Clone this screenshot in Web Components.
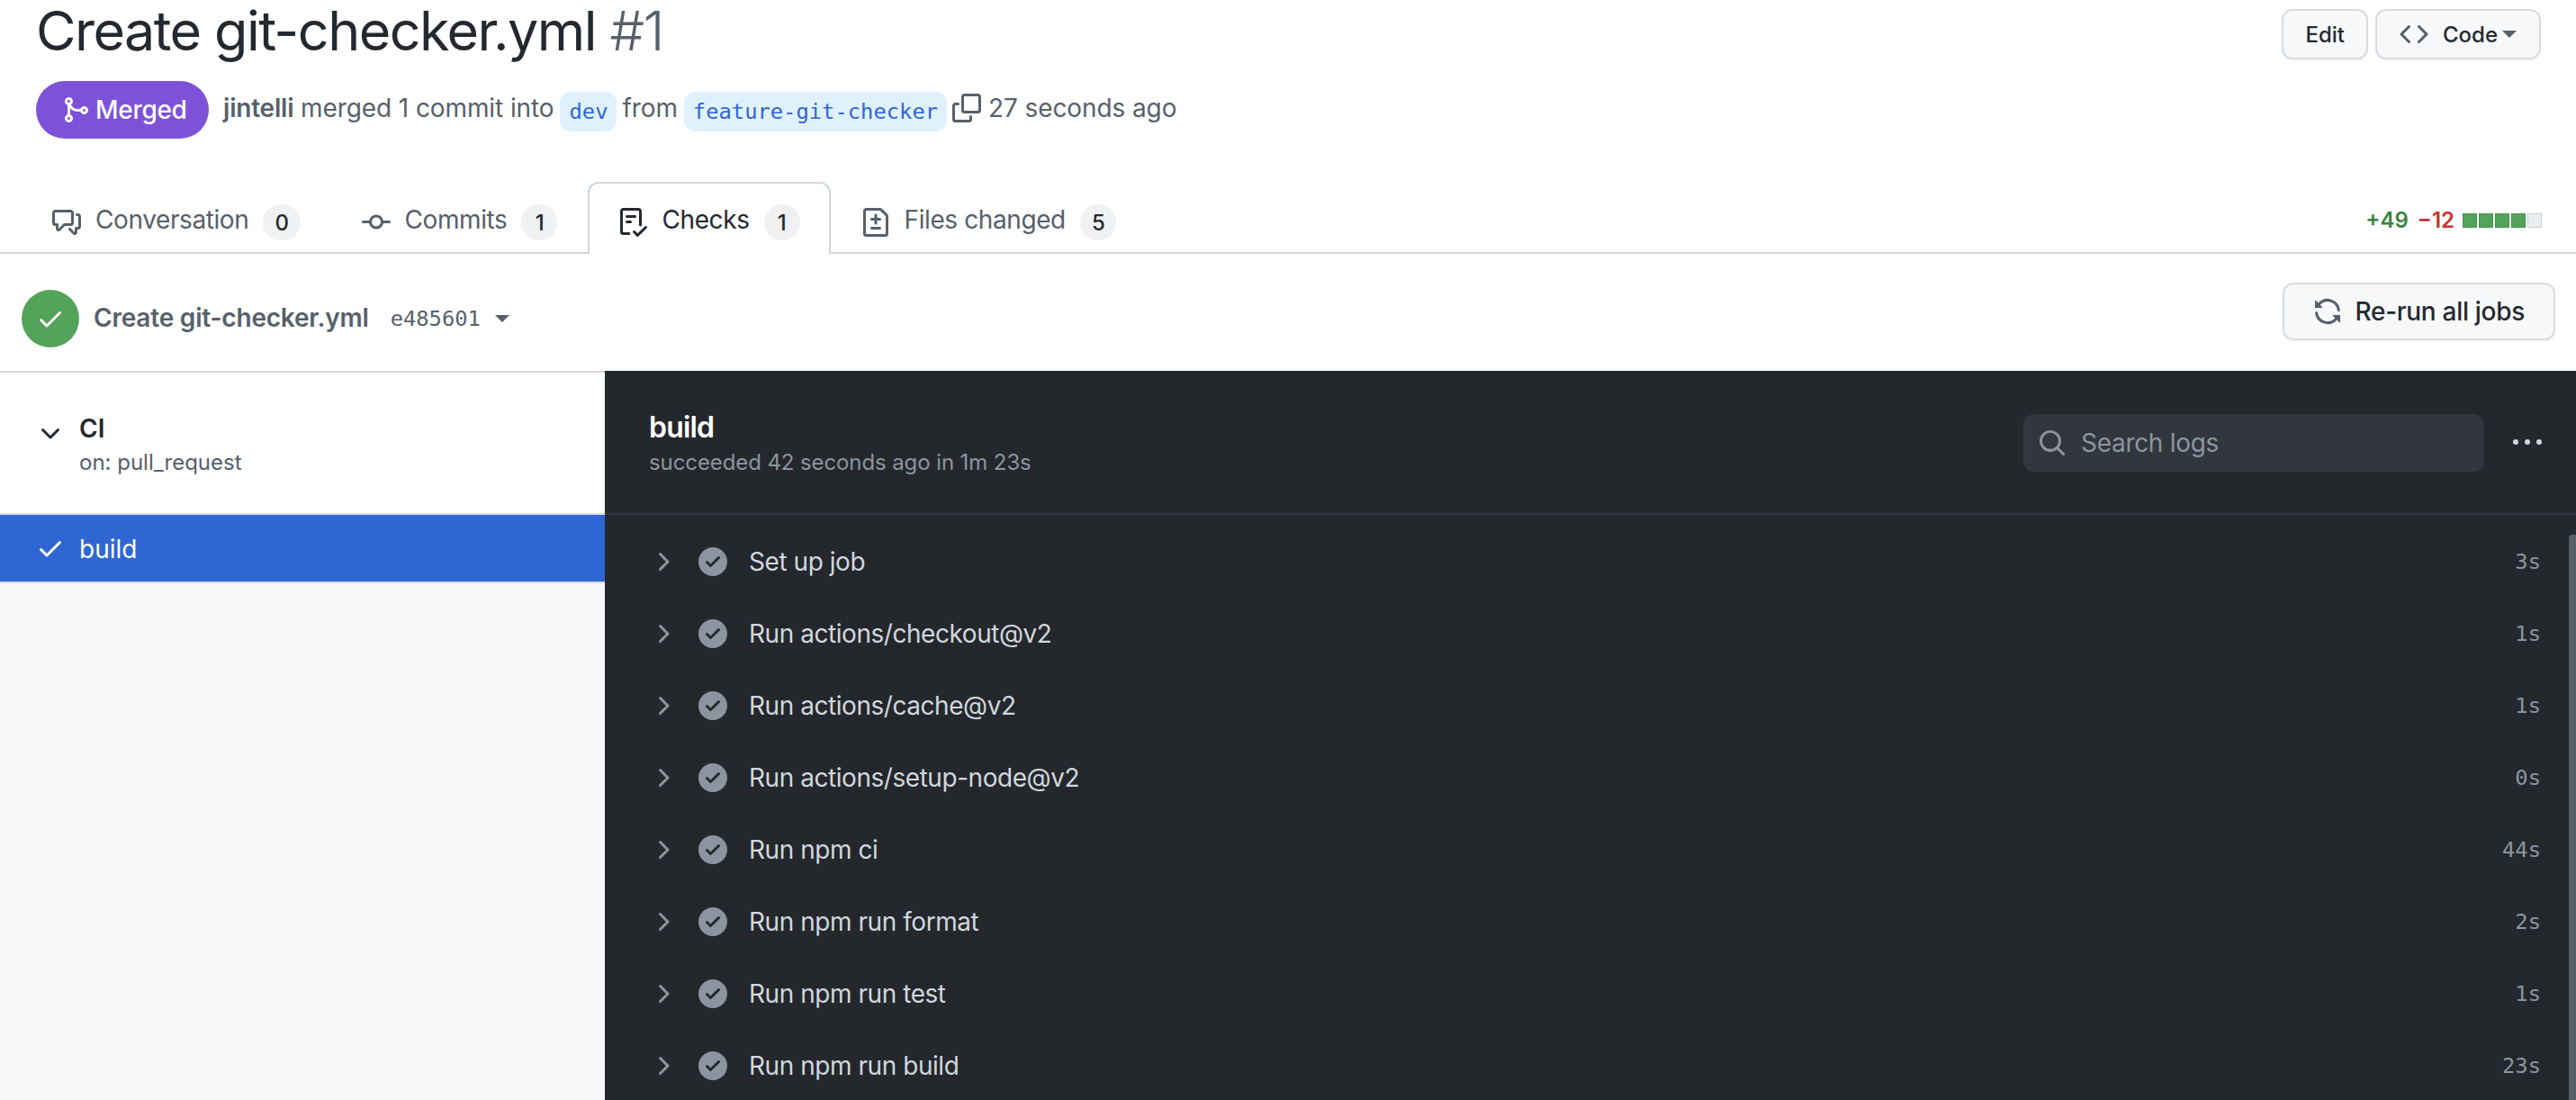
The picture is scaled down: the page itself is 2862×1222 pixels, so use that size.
<!DOCTYPE html>
<html>
<head>
<meta charset="utf-8">
<title>Create git-checker.yml #1</title>
<style>
  html, body { margin: 0; height: 100%; overflow: hidden; background: #fff; }
  body { font-family: Inter, "Noto Sans", sans-serif; color: #24292f; }
</style>
</head>
<body>
<pr-page></pr-page>
<script>
const ICONS = {
  merge: "M5.45 5.154A4.25 4.25 0 0 0 9.25 7.5h1.378a2.251 2.251 0 1 1 0 1.5H9.25A5.734 5.734 0 0 1 5 7.123v3.505a2.25 2.25 0 1 1-1.5 0V5.372a2.25 2.25 0 1 1 1.95-.218ZM4.25 13.5a.75.75 0 1 0 0-1.5.75.75 0 0 0 0 1.5Zm8.5-4.5a.75.75 0 1 0 0-1.5.75.75 0 0 0 0 1.5ZM5 3.25a.75.75 0 1 0 0 .005V3.25Z",
  discussion: "M1.75 1h8.5c.966 0 1.75.784 1.75 1.75v5.5A1.75 1.75 0 0 1 10.25 10H7.061l-2.574 2.573A1.458 1.458 0 0 1 2 11.543V10h-.25A1.75 1.75 0 0 1 0 8.25v-5.5C0 1.784.784 1 1.75 1ZM1.5 2.75v5.5c0 .138.112.25.25.25h1a.75.75 0 0 1 .75.75v2.19l2.72-2.72a.749.749 0 0 1 .53-.22h3.5a.25.25 0 0 0 .25-.25v-5.5a.25.25 0 0 0-.25-.25h-8.5a.25.25 0 0 0-.25.25Zm13 2a.25.25 0 0 0-.25-.25h-.5a.75.75 0 0 1 0-1.5h.5c.966 0 1.75.784 1.75 1.75v5.5A1.75 1.75 0 0 1 14.25 12H14v1.543a1.458 1.458 0 0 1-2.487 1.03L9.22 12.28a.749.749 0 0 1 .326-1.275.749.749 0 0 1 .734.215l2.22 2.22v-2.19a.75.75 0 0 1 .75-.75h1a.25.25 0 0 0 .25-.25Z",
  commit: "M11.93 8.5a4.002 4.002 0 0 1-7.86 0H.75a.75.75 0 0 1 0-1.5h3.32a4.002 4.002 0 0 1 7.86 0h3.32a.75.75 0 0 1 0 1.5Zm-1.43-.75a2.5 2.5 0 1 0-5 0 2.5 2.5 0 0 0 5 0Z",
  checklist: "M2.5 1.75v11.5c0 .138.112.25.25.25h3.17a.75.75 0 0 1 0 1.5H2.75A1.75 1.75 0 0 1 1 13.25V1.75C1 .784 1.784 0 2.75 0h8.5C12.216 0 13 .784 13 1.75v7.736a.75.75 0 0 1-1.5 0V1.75a.25.25 0 0 0-.25-.25h-8.5a.25.25 0 0 0-.25.25Zm13.274 9.537v-.001l-4.557 4.45a.75.75 0 0 1-1.055-.008l-1.943-1.95a.75.75 0 0 1 1.062-1.058l1.419 1.425 4.026-3.932a.75.75 0 1 1 1.048 1.074ZM4.75 4h4.5a.75.75 0 0 1 0 1.5h-4.5a.75.75 0 0 1 0-1.5ZM4 7.75A.75.75 0 0 1 4.75 7h2a.75.75 0 0 1 0 1.5h-2A.75.75 0 0 1 4 7.75Z",
  filediff: "M1 1.75C1 .784 1.784 0 2.75 0h7.586c.464 0 .909.184 1.237.513l2.914 2.914c.329.328.513.773.513 1.237v9.586A1.75 1.75 0 0 1 13.25 16H2.75A1.75 1.75 0 0 1 1 14.25Zm1.75-.25a.25.25 0 0 0-.25.25v12.5c0 .138.112.25.25.25h10.5a.25.25 0 0 0 .25-.25V4.664a.25.25 0 0 0-.073-.177l-2.914-2.914a.25.25 0 0 0-.177-.073ZM8 3.25a.75.75 0 0 1 .75.75v1.5h1.5a.75.75 0 0 1 0 1.5h-1.5v1.5a.75.75 0 0 1-1.5 0V7h-1.5a.75.75 0 0 1 0-1.5h1.5V4A.75.75 0 0 1 8 3.25Zm-3 8a.75.75 0 0 1 .75-.75h4.5a.75.75 0 0 1 0 1.5h-4.5a.75.75 0 0 1-.75-.75Z",
  copy: "M0 6.75C0 5.784.784 5 1.75 5h1.5a.75.75 0 0 1 0 1.5h-1.5a.25.25 0 0 0-.25.25v7.5c0 .138.112.25.25.25h7.5a.25.25 0 0 0 .25-.25v-1.5a.75.75 0 0 1 1.5 0v1.5A1.75 1.75 0 0 1 9.25 16h-7.5A1.75 1.75 0 0 1 0 14.25ZM5 1.75C5 .784 5.784 0 6.75 0h7.5C15.216 0 16 .784 16 1.75v7.5A1.75 1.75 0 0 1 14.25 11h-7.5A1.75 1.75 0 0 1 5 9.25Zm1.75-.25a.25.25 0 0 0-.25.25v7.5c0 .138.112.25.25.25h7.5a.25.25 0 0 0 .25-.25v-7.5a.25.25 0 0 0-.25-.25Z",
  code: "m11.28 3.22 4.25 4.25a.75.75 0 0 1 0 1.06l-4.25 4.25a.749.749 0 0 1-1.275-.326.749.749 0 0 1 .215-.734L13.94 8l-3.72-3.72a.749.749 0 0 1 .326-1.275.749.749 0 0 1 .734.215Zm-6.56 0a.751.751 0 0 1 1.042.018.751.751 0 0 1 .018 1.042L2.06 8l3.72 3.72a.749.749 0 0 1-.326 1.275.749.749 0 0 1-.734-.215L.47 8.53a.75.75 0 0 1 0-1.06Z",
  sync: "M1.705 8.005a.75.75 0 0 1 .834.656 5.5 5.5 0 0 0 9.592 2.97l-1.204-1.204a.25.25 0 0 1 .177-.427h3.646a.25.25 0 0 1 .25.25v3.646a.25.25 0 0 1-.427.177l-1.38-1.38A7.002 7.002 0 0 1 1.05 8.84a.75.75 0 0 1 .656-.834ZM8 2.5a5.487 5.487 0 0 0-4.131 1.869l1.204 1.204A.25.25 0 0 1 4.896 6H1.25A.25.25 0 0 1 1 5.75V2.104a.25.25 0 0 1 .427-.177l1.38 1.38A7.002 7.002 0 0 1 14.95 7.16a.75.75 0 0 1-1.49.178A5.5 5.5 0 0 0 8 2.5Z",
  check: "M13.78 4.22a.75.75 0 0 1 0 1.06l-7.25 7.25a.75.75 0 0 1-1.06 0L2.22 9.28a.751.751 0 0 1 .018-1.042.751.751 0 0 1 1.042-.018L6 10.94l6.72-6.72a.75.75 0 0 1 1.06 0Z",
  down: "M12.78 5.22a.749.749 0 0 1 0 1.06l-4.25 4.25a.749.749 0 0 1-1.06 0L3.22 6.28a.749.749 0 1 1 1.06-1.06L8 8.939l3.72-3.719a.749.749 0 0 1 1.06 0Z",
  right: "M6.22 3.22a.75.75 0 0 1 1.06 0l4.25 4.25a.75.75 0 0 1 0 1.06l-4.25 4.25a.751.751 0 0 1-1.042-.018.751.751 0 0 1-.018-1.042L9.94 8 6.22 4.28a.75.75 0 0 1 0-1.06Z",
  kebab: "M8 9a1.5 1.5 0 1 0 0-3 1.5 1.5 0 0 0 0 3ZM1.5 9a1.5 1.5 0 1 0 0-3 1.5 1.5 0 0 0 0 3Zm13 0a1.5 1.5 0 1 0 0-3 1.5 1.5 0 0 0 0 3Z",
  search: "M10.68 11.74a6 6 0 0 1-7.922-8.982 6 6 0 0 1 8.982 7.922l3.04 3.04a.749.749 0 0 1-.326 1.275.749.749 0 0 1-.734-.215ZM11.5 7a4.499 4.499 0 1 0-8.997 0A4.499 4.499 0 0 0 11.5 7Z",
  circlecheck: "M8 16A8 8 0 1 1 8 0a8 8 0 0 1 0 16Zm3.78-9.72a.751.751 0 0 0-.018-1.042.751.751 0 0 0-1.042-.018L6.75 9.19 5.28 7.72a.751.751 0 0 0-1.042.018.751.751 0 0 0-.018 1.042l2 2a.75.75 0 0 0 1.06 0Z"
};

class GhIcon extends HTMLElement {
  constructor() {
    super();
    this.attachShadow({ mode: "open" });
  }
  connectedCallback() {
    const size = this.getAttribute("size") || 32;
    this.shadowRoot.innerHTML = `
      <style>
        :host { display: inline-flex; flex: none; }
        svg { display: block; fill: currentColor; }
      </style>
      <svg width="${size}" height="${size}" viewBox="0 0 16 16"><path d="${ICONS[this.getAttribute("name")]}"/></svg>`;
  }
}

class GhButton extends HTMLElement {
  constructor() {
    super();
    this.attachShadow({ mode: "open" });
    this.shadowRoot.innerHTML = `
      <style>
        :host {
          display: inline-flex;
          align-items: center;
          box-sizing: border-box;
          height: 56px;
          padding: 0 24px;
          gap: 16px;
          border: 2px solid #d8dcdf;
          border-radius: 12px;
          background: #f6f8fa;
          box-shadow: 0 2px 0 rgba(27, 31, 36, 0.04);
          font-size: 24px;
          font-weight: 500;
          color: #24292f;
          white-space: nowrap;
        }
        :host([code]) { padding: 0 25px; }
        :host([big]) { height: 64px; font-size: 28px; padding: 0 32px 0 32px; gap: 15px; letter-spacing: -0.3px; }
      </style>
      <slot></slot>`;
  }
}

class PrCounter extends HTMLElement {
  constructor() {
    super();
    this.attachShadow({ mode: "open" });
    this.shadowRoot.innerHTML = `
      <style>
        :host {
          display: inline-flex;
          align-items: center;
          justify-content: center;
          box-sizing: border-box;
          min-width: 40px;
          height: 40px;
          padding: 0 13px;
          border-radius: 20px;
          background: #eff1f3;
          font-size: 24px;
          font-weight: 500;
          color: #24292f;
        }
      </style>
      <slot></slot>`;
  }
}

class PrTab extends HTMLElement {
  constructor() {
    super();
    this.attachShadow({ mode: "open" });
    this.shadowRoot.innerHTML = `
      <style>
        :host {
          display: flex;
          align-items: center;
          gap: 16px;
          box-sizing: border-box;
          height: 80px;
          padding: 8px 32px 0;
          margin-bottom: -2px;
          border: 2px solid transparent;
          border-bottom: 0;
          border-radius: 12px 12px 0 0;
          font-size: 28px;
          letter-spacing: -0.4px;
          color: #57606a;
          white-space: nowrap;
        }
        :host([selected]) { background: #fff; border-color: #d0d7de; color: #24292f; }
        span { margin-bottom: 6px; }
        ::slotted(gh-icon) { color: #57606a; }
        :host([selected]) ::slotted(gh-icon) { color: #24292f; }
      </style>
      <slot name="icon"></slot>
      <span><slot></slot></span>
      <slot name="count"></slot>`;
  }
}

class DiffStat extends HTMLElement {
  constructor() {
    super();
    this.attachShadow({ mode: "open" });
    this.shadowRoot.innerHTML = `
      <style>
        :host {
          display: flex;
          align-items: center;
          gap: 10px;
          font-size: 24px;
          font-weight: 600;
        }
        .add { color: #3a8540; }
        .del { color: #c4332f; }
        .bars { display: flex; gap: 2px; margin-left: -1px; }
        i { width: 16px; height: 16px; box-sizing: border-box; background: #54a35a; border: 1px solid rgba(27, 31, 36, 0.15); }
        i.off { background: #eaeef2; }
      </style>
      <span class="add">+49</span>
      <span class="del">−12</span>
      <span class="bars"><i></i><i></i><i></i><i></i><i class="off"></i></span>`;
  }
}

class PrHeader extends HTMLElement {
  constructor() {
    super();
    this.attachShadow({ mode: "open" });
    this.shadowRoot.innerHTML = `
      <style>
        :host { display: block; height: 202px; box-sizing: border-box; padding: 10px 39px 0 40px; }
        .top { display: flex; justify-content: space-between; height: 80px; }
        h1 { margin: -6px 0 0 0; font-size: 61px; line-height: 61px; font-weight: 400; letter-spacing: -1.56px; color: #24292f; white-space: nowrap; }
        h1 span { color: #57606a; font-weight: 300; }
        .actions { display: flex; gap: 8px; }
        .actions gh-icon { color: #57606a; }
        .caret { width: 0; height: 0; border: 8px solid transparent; border-top-color: #57606a; border-bottom: 0; margin-left: -11px; }
        .meta { display: flex; align-items: center; height: 64px; font-size: 28px; letter-spacing: -0.1px; color: #57606a; white-space: nowrap; }
        .meta > span { margin-bottom: 4px; }
        .meta > .badge { margin-bottom: 0; }
        .badge {
          display: flex; align-items: center; gap: 6px;
          box-sizing: border-box; width: 192px; height: 64px;
          padding-left: 28px; margin-right: 16px;
          border-radius: 32px; background: #7d52d8; color: #fff; font-weight: 500; letter-spacing: -0.3px;
        }
        b { font-weight: 600; letter-spacing: -0.2px; }
        code {
          font-family: "DejaVu Sans Mono", monospace; font-size: 23.8px; line-height: 44px; letter-spacing: 0;
          padding: 0 10px; margin: 4px 6px 0 7px; border-radius: 12px;
          background: #e0f1fe; color: #2f66d4;
        }
        .copy { margin: 0 8px 4px 0; color: #57606a; }
      </style>
      <div class="top">
        <h1>Create git-checker.yml <span>#1</span></h1>
        <div class="actions">
          <gh-button>Edit</gh-button>
          <gh-button code><gh-icon name="code" size="32"></gh-icon>Code<span class="caret"></span></gh-button>
        </div>
      </div>
      <div class="meta">
        <span class="badge"><gh-icon name="merge" size="32"></gh-icon>Merged</span>
        <span><b>jintelli</b> merged 1 commit into</span>
        <code>dev</code>
        <span>from</span>
        <code>feature-git-checker</code>
        <gh-icon class="copy" name="copy" size="32"></gh-icon>
        <span>27 seconds ago</span>
      </div>`;
  }
}

class PrTabs extends HTMLElement {
  constructor() {
    super();
    this.attachShadow({ mode: "open" });
    this.shadowRoot.innerHTML = `
      <style>
        :host {
          display: flex;
          align-items: flex-start;
          box-sizing: border-box;
          height: 80px;
          padding: 0 38px 0 24px;
          border-bottom: 2px solid #d0d7de;
        }
        diff-stat { margin-left: auto; margin-top: 28px; }
      </style>
      <pr-tab><gh-icon slot="icon" name="discussion"></gh-icon>Conversation<pr-counter slot="count">0</pr-counter></pr-tab>
      <pr-tab><gh-icon slot="icon" name="commit"></gh-icon>Commits<pr-counter slot="count">1</pr-counter></pr-tab>
      <pr-tab selected><gh-icon slot="icon" name="checklist"></gh-icon>Checks<pr-counter slot="count">1</pr-counter></pr-tab>
      <pr-tab><gh-icon slot="icon" name="filediff"></gh-icon>Files changed<pr-counter slot="count">5</pr-counter></pr-tab>
      <diff-stat></diff-stat>`;
  }
}

class CheckBar extends HTMLElement {
  constructor() {
    super();
    this.attachShadow({ mode: "open" });
    this.shadowRoot.innerHTML = `
      <style>
        :host { display: flex; align-items: flex-start; box-sizing: border-box; height: 130px; padding: 40px 23px 0 24px; color: #57606a; }
        .status { width: 64px; height: 64px; border-radius: 50%; background: #54a35a; color: #fff; display: flex; align-items: center; justify-content: center; margin-right: 16px; }
        .title { font-size: 28px; font-weight: 600; line-height: 62px; letter-spacing: -0.2px; }
        .sha { font-family: "DejaVu Sans Mono", monospace; font-size: 23.8px; line-height: 64px; margin-left: 24px; }
        .caret { width: 0; height: 0; border: 8px solid transparent; border-top-color: #57606a; border-bottom: 0; margin: 28px 0 0 16px; }
        gh-button { margin: -8px 0 0 auto; }
        gh-button gh-icon { color: #57606a; }
      </style>
      <span class="status"><gh-icon name="check" size="32"></gh-icon></span>
      <span class="title">Create git-checker.yml</span>
      <span class="sha">e485601</span>
      <span class="caret"></span>
      <gh-button big><gh-icon name="sync" size="32"></gh-icon>Re-run all jobs</gh-button>`;
  }
}

class WorkflowSide extends HTMLElement {
  constructor() {
    super();
    this.attachShadow({ mode: "open" });
    this.shadowRoot.innerHTML = `
      <style>
        :host { display: block; flex: none; width: 672px; background: #f6f8fa; border-top: 2px solid #d0d7de; box-sizing: border-box; }
        .wf { display: flex; box-sizing: border-box; height: 158px; padding: 44px 0 0 40px; gap: 16px; background: #fff; border-bottom: 2px solid #d8dde2; }
        .wf gh-icon { margin-top: 8px; }
        .name { font-size: 28px; font-weight: 600; line-height: 36px; color: #24292f; }
        .on { font-size: 24px; line-height: 36px; margin-top: 2px; color: #57606a; }
        .job { display: flex; align-items: center; gap: 16px; box-sizing: border-box; height: 76px; padding: 2px 0 0 40px; background: #2f66d4; color: #fff; font-size: 28px; border-bottom: 2px solid #d8dde2; }
        .job gh-icon { margin-top: -2px; }
      </style>
      <div class="wf">
        <gh-icon name="down"></gh-icon>
        <div><div class="name">CI</div><div class="on">on: pull_request</div></div>
      </div>
      <div class="job"><gh-icon name="check"></gh-icon>build</div>`;
  }
}

class JobStep extends HTMLElement {
  constructor() {
    super();
    this.attachShadow({ mode: "open" });
    this.shadowRoot.innerHTML = `
      <style>
        :host { display: flex; align-items: center; height: 80px; padding: 0 39px 0 48px; font-size: 28px; letter-spacing: -0.45px; color: #d0d7de; }
        .arrow { color: #8c959f; margin-right: 24px; }
        .ok { color: #8c959f; margin-right: 24px; }
        .time { margin-left: auto; font-family: "DejaVu Sans Mono", monospace; font-size: 23.8px; letter-spacing: 0; color: #8c959f; }
      </style>
      <gh-icon class="arrow" name="right"></gh-icon>
      <gh-icon class="ok" name="circlecheck"></gh-icon>
      <span><slot></slot></span>
      <span class="time"></span>`;
  }
  connectedCallback() {
    this.shadowRoot.querySelector(".time").textContent = this.getAttribute("time");
  }
}

class JobPanel extends HTMLElement {
  constructor() {
    super();
    this.attachShadow({ mode: "open" });
    this.shadowRoot.innerHTML = `
      <style>
        :host { display: block; position: relative; flex: 1; min-width: 0; overflow: hidden; background: #24272c; }
        header { display: flex; align-items: center; box-sizing: border-box; height: 160px; padding: 0 38px 0 49px; border-bottom: 2px solid #32363c; }
        .head { flex: 1; margin-top: 4px; }
        .name { font-size: 32px; font-weight: 600; line-height: 40px; letter-spacing: -0.8px; color: #fff; }
        .sub { font-size: 24px; line-height: 36px; letter-spacing: -0.1px; color: #8c959f; margin-top: 1px; }
        .search { display: flex; align-items: center; gap: 16px; box-sizing: border-box; width: 512px; height: 64px; padding-left: 16px; margin: 2px 32px 0 0; border-radius: 12px; background: #32363e; color: #8c959f; font-size: 28px; letter-spacing: -0.3px; }
        .dots { color: #d0d7de; margin-top: 2px; }
        .list { padding-top: 12px; }
        .bar { position: absolute; right: 0; top: 182px; bottom: 0; width: 8px; background: #57606a; border-radius: 4px 0 0 0; }
      </style>
      <header>
        <div class="head">
          <div class="name">build</div>
          <div class="sub">succeeded 42 seconds ago in 1m 23s</div>
        </div>
        <div class="search"><gh-icon name="search"></gh-icon>Search logs</div>
        <gh-icon class="dots" name="kebab"></gh-icon>
      </header>
      <div class="list"><slot></slot></div>
      <div class="bar"></div>`;
  }
}

class PrPage extends HTMLElement {
  constructor() {
    super();
    this.attachShadow({ mode: "open" });
    this.shadowRoot.innerHTML = `
      <style>
        :host { display: flex; flex-direction: column; height: 1222px; overflow: hidden; }
        .main { display: flex; flex: 1; min-height: 0; }
      </style>
      <pr-header></pr-header>
      <pr-tabs></pr-tabs>
      <check-bar></check-bar>
      <div class="main">
        <workflow-side></workflow-side>
        <job-panel>
          <job-step time="3s">Set up job</job-step>
          <job-step time="1s">Run actions/checkout@v2</job-step>
          <job-step time="1s">Run actions/cache@v2</job-step>
          <job-step time="0s">Run actions/setup-node@v2</job-step>
          <job-step time="44s">Run npm ci</job-step>
          <job-step time="2s">Run npm run format</job-step>
          <job-step time="1s">Run npm run test</job-step>
          <job-step time="23s">Run npm run build</job-step>
        </job-panel>
      </div>`;
  }
}

customElements.define("gh-icon", GhIcon);
customElements.define("gh-button", GhButton);
customElements.define("pr-counter", PrCounter);
customElements.define("pr-tab", PrTab);
customElements.define("diff-stat", DiffStat);
customElements.define("pr-header", PrHeader);
customElements.define("pr-tabs", PrTabs);
customElements.define("check-bar", CheckBar);
customElements.define("workflow-side", WorkflowSide);
customElements.define("job-step", JobStep);
customElements.define("job-panel", JobPanel);
customElements.define("pr-page", PrPage);
</script>
</body>
</html>
